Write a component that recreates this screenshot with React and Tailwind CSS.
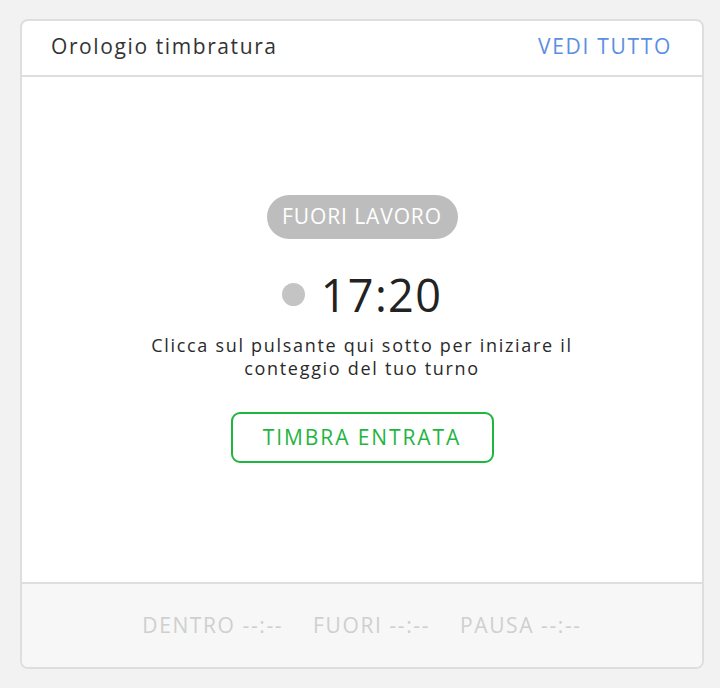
export default function App() {
  return (
    <div className="w-[720px] h-[688px] bg-[#f2f2f2] pt-[19px] pl-[20px]" style={{ fontFamily: '"Open Sans", "Noto Sans", sans-serif' }}>
      <div className="w-[684px] h-[650px] bg-white border-2 border-[#dedede] rounded-[8px] flex flex-col overflow-hidden">
        <div className="h-[56px] flex items-center justify-between pl-[29px] pr-[30px] pb-[3px] border-b-2 border-[#dedede] shrink-0">
          <span className="text-[21px] tracking-[1.6px] text-[#333333]">Orologio timbratura</span>
          <span className="text-[21px] tracking-[1.7px] text-[#5b8fe3]">VEDI TUTTO</span>
        </div>
        <div className="flex-1 flex flex-col items-center pt-[118px]">
          <div className="h-[44px] w-[191px] rounded-full bg-[#bdbdbd] text-white text-[21px] tracking-[0.9px] flex items-center justify-center">FUORI LAVORO</div>
          <div className="mt-[30px] flex items-center h-[50px]">
            <span className="w-[23px] h-[23px] rounded-full bg-[#c4c4c4] mr-[16px]"></span>
            <span className="text-[45px] tracking-[1.4px] text-[#222222] leading-none">17:20</span>
          </div>
          <p className="mt-[15px] text-[18px] tracking-[1.7px] leading-[23px] text-[#2a2a2a] text-center whitespace-nowrap">Clicca sul pulsante qui sotto per iniziare il<br />conteggio del tuo turno</p>
          <button className="mt-[32px] w-[263px] h-[51px] border-2 border-[#1fb53f] rounded-[9px] text-[21px] tracking-[1.9px] text-[#1fb53f]">TIMBRA ENTRATA</button>
        </div>
        <div className="h-[85px] shrink-0 bg-[#f7f7f7] border-t-2 border-[#dedede] flex items-center justify-center gap-[30px] text-[21px] tracking-[1.6px] text-[#cfcfcf]">
          <span>DENTRO --:--</span>
          <span>FUORI --:--</span>
          <span>PAUSA --:--</span>
        </div>
      </div>
    </div>
  );
}
